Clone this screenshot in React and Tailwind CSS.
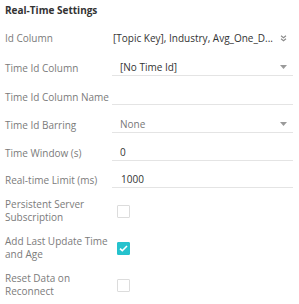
import React from "react";

const Caret = () => (
  <svg width="7" height="4" viewBox="0 0 7 4" className="shrink-0">
    <path d="M0 0h7L3.5 4z" fill="#9a9a9a" />
  </svg>
);

const DoubleChevron = () => (
  <svg width="7" height="7" viewBox="0 0 7 7" className="shrink-0">
    <path d="M1 0.8l2.5 2 2.5-2M1 3.8l2.5 2 2.5-2" fill="none" stroke="#8a8a8a" strokeWidth="1.1" />
  </svg>
);

const Field = ({ label, children, className = "" }) => (
  <div className={`flex items-end ${className}`}>
    <div className="w-[107px] shrink-0 leading-[16px] text-[#7b7b7b]">{label}</div>
    <div className="flex h-[17px] flex-1 items-center border-b border-[#e4e4e4] leading-[16px] text-[#333]">
      {children}
    </div>
  </div>
);

const Check = ({ label, checked, className = "" }) => (
  <div className={`flex items-center ${className}`}>
    <div className="w-[112px] shrink-0 pr-[5px] leading-[13px] text-[#7b7b7b]">{label}</div>
    <div
      className={`flex h-[13px] w-[13px] items-center justify-center rounded-[1px] border ${
        checked ? "border-[#25c2cd] bg-[#25c2cd]" : "border-[#dcdcdc] bg-white"
      }`}
    >
      {checked && (
        <svg width="9" height="7" viewBox="0 0 9 7">
          <path d="M1 3.6l2.3 2.1L8 1" fill="none" stroke="white" strokeWidth="1.6" />
        </svg>
      )}
    </div>
  </div>
);

export default function App() {
  return (
    <div
      className="h-[304px] w-[299px] overflow-hidden bg-white pl-[5px] pr-[6px] text-[10px]"
      style={{ fontFamily: '"Open Sans", sans-serif' }}
    >
      {/* Header */}
      <div className="pt-[2px] text-[10px] font-bold leading-[16px] text-[#333]">Real-Time Settings</div>

      <div className="mt-[12px] flex items-center">
        <div className="w-[107px] shrink-0 leading-[16px] text-[#7b7b7b]">Id Column</div>
        <div className="flex flex-1 items-center leading-[16px] text-[#333]">
          <span className="flex-1 truncate pl-[1px]">[Topic Key], Industry, Avg_One_D...</span>
          <span className="ml-[6px] mr-[6px]">
            <DoubleChevron />
          </span>
        </div>
      </div>

      <Field label="Time Id Column" className="mt-[13px]">
        <span className="flex-1 pl-[8px]">[No Time Id]</span>
        <span className="mr-[6px]">
          <Caret />
        </span>
      </Field>

      <Field label="Time Id Column Name" className="mt-[12px]" />

      <Field label="Time Id Barring" className="mt-[11px]">
        <span className="flex-1 pl-[8px] text-[#777]">None</span>
        <span className="mr-[6px]">
          <Caret />
        </span>
      </Field>

      <Field label="Time Window (s)" className="mt-[11px]">
        <span className="pl-[8px]">0</span>
      </Field>

      <Field label="Real-time Limit (ms)" className="mt-[10px]">
        <span className="pl-[9px]">1000</span>
      </Field>

      {/* Checkboxes */}
      <Check label="Persistent Server Subscription" className="mt-[10px]" />
      <Check label="Add Last Update Time and Age" checked className="mt-[11px]" />
      <Check label="Reset Data on Reconnect" className="mt-[11px]" />
    </div>
  );
}
